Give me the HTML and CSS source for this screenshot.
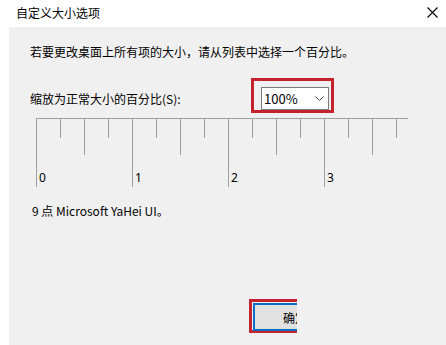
FILE: index.html
```html
<!DOCTYPE html>
<html lang="zh-CN">
<head>
<meta charset="utf-8">
<title>自定义大小选项</title>
<link rel="stylesheet" href="styles.css">
</head>
<body>
<div class="window">
  <div class="titlebar">
    <span class="title">自定义大小选项</span>
    <svg class="close" width="11" height="11" viewBox="0 0 11 11"><path d="M0.5 0.5 L10.5 10.5 M10.5 0.5 L0.5 10.5" stroke="#000" stroke-width="1.1" fill="none"/></svg>
  </div>
  <div class="panel">
    <p class="intro">若要更改桌面上所有项的大小，请从列表中选择一个百分比。</p>
    <div class="scale-row">
      <span class="scale-label">缩放为正常大小的百分比(S):</span>
      <div class="select highlight">
        <span class="select-value">100%</span>
        <svg class="chevron" width="9" height="5" viewBox="0 0 9 5"><path d="M0.5 0.5 L4.5 4.5 L8.5 0.5" stroke="#444" stroke-width="1" fill="none"/></svg>
      </div>
    </div>
    <svg class="ruler" width="380" height="72" viewBox="0 0 380 72">
      <g stroke="#a0a0a0" stroke-width="1" shape-rendering="crispEdges">
        <line x1="0" y1="0.5" x2="372" y2="0.5"/>
        <line x1="0.5" y1="0" x2="0.5" y2="69"/>
        <line x1="24.5" y1="0" x2="24.5" y2="20"/>
        <line x1="48.5" y1="0" x2="48.5" y2="37"/>
        <line x1="72.5" y1="0" x2="72.5" y2="20"/>
        <line x1="96.5" y1="0" x2="96.5" y2="69"/>
        <line x1="120.5" y1="0" x2="120.5" y2="20"/>
        <line x1="144.5" y1="0" x2="144.5" y2="37"/>
        <line x1="168.5" y1="0" x2="168.5" y2="20"/>
        <line x1="192.5" y1="0" x2="192.5" y2="69"/>
        <line x1="216.5" y1="0" x2="216.5" y2="20"/>
        <line x1="240.5" y1="0" x2="240.5" y2="37"/>
        <line x1="264.5" y1="0" x2="264.5" y2="20"/>
        <line x1="288.5" y1="0" x2="288.5" y2="69"/>
        <line x1="312.5" y1="0" x2="312.5" y2="20"/>
        <line x1="336.5" y1="0" x2="336.5" y2="37"/>
        <line x1="360.5" y1="0" x2="360.5" y2="20"/>
      </g>
      <g class="ruler-text">
        <text x="3" y="64">0</text>
        <text x="99" y="64">1</text>
        <text x="195" y="64">2</text>
        <text x="291" y="64">3</text>
      </g>
    </svg>
    <p class="font-info">9 点 Microsoft YaHei UI。</p>
    <div class="footer">
      <div class="btn-clip">
        <div class="btn-frame">
          <button class="btn-ok" type="button">确定</button>
        </div>
      </div>
    </div>
  </div>
</div>
</body>
</html>
```

FILE: styles.css
```css
html, body {
  margin: 0;
  padding: 0;
}

body {
  width: 446px;
  height: 345px;
  overflow: hidden;
  background: #ffffff;
  font-family: "Noto Sans CJK SC", "Noto Sans", sans-serif;
  font-size: 12px;
  color: #000;
}

.window {
  display: flex;
  flex-direction: column;
  height: 345px;
}

.titlebar {
  height: 27px;
  display: flex;
  align-items: center;
  justify-content: space-between;
  padding: 0 8px 2px 16px;
  box-sizing: border-box;
}

.title {
  line-height: 16px;
}

.close {
  display: block;
}

.panel {
  flex: 1;
  margin-left: 9px;
  background: #f0f0f0;
  padding: 17px 0 12px 21px;
  display: flex;
  flex-direction: column;
  box-sizing: border-box;
}

.intro {
  margin: 0;
  line-height: 16px;
}

.scale-row {
  margin-top: 27px;
  display: flex;
  align-items: center;
  height: 23px;
}

.scale-label {
  width: 231px;
  line-height: 16px;
}

.select {
  position: relative;
  width: 68px;
  height: 23px;
  box-sizing: border-box;
  border: 1px solid #7a7a7a;
  background: #ffffff;
  display: flex;
  align-items: center;
  justify-content: space-between;
  padding: 0 4px 0 2px;
  font-size: 13px;
}

.select-value {
  line-height: 16px;
}

.chevron {
  display: block;
}

.highlight::after {
  content: "";
  position: absolute;
  top: -10px;
  left: -11px;
  right: -6px;
  bottom: -4px;
  border: 3px solid #c4232d;
}

.ruler {
  display: block;
  margin: 8px 0 0 6px;
}

.ruler-text {
  font-family: "Noto Sans", sans-serif;
  font-size: 12px;
  fill: #000;
}

.font-info {
  margin: 13px 0 0 2px;
  line-height: 16px;
}

.footer {
  margin-top: auto;
  display: flex;
}

.btn-clip {
  margin-left: 219px;
  width: 48px;
  overflow: hidden;
}

.btn-frame {
  width: 92px;
  height: 34px;
  box-sizing: border-box;
  border: 3px solid #c4232d;
  padding: 1px;
}

.btn-ok {
  display: block;
  width: 84px;
  height: 28px;
  box-sizing: border-box;
  border: 2px solid #0a6fc4;
  background: #e1e1e1;
  font-family: "Noto Sans CJK SC", sans-serif;
  font-size: 12px;
  color: #000;
  padding: 0;
}
```
